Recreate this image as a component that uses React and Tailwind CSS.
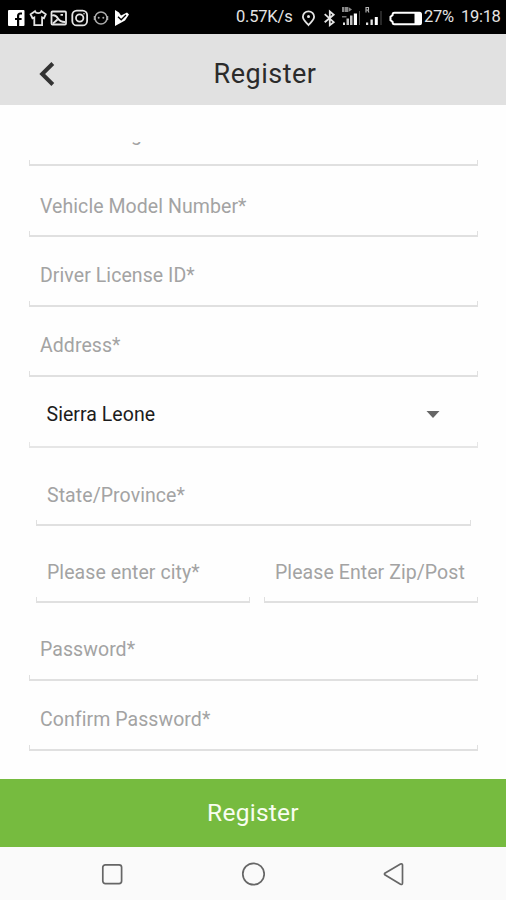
import React, { useState } from 'react';
import clsx from 'clsx';

// --- STATUS BAR ---
function StatusBar() {
  return (
    <div className="flex h-[34px] shrink-0 items-center justify-between bg-black pl-2 pr-[6px] pt-px text-[#e4e4e4]">
      <svg width="124" height="20" viewBox="0 0 124 20" fill="none" stroke="currentColor" strokeWidth="1.8">
        {/* facebook */}
        <rect x="0" y="2" width="16.500" height="16" rx="1" fill="#fff" stroke="none" />
        <path d="M14 5.500h-1.500c-1.700 0-2.400.8-2.400 2.400V18M7 11h6.600" stroke="#000" strokeWidth="2.200" />
        {/* shirt */}
        <path d="M27 3.2l-4.400 3 1.900 4 1.800-.8v7.800h7.800V9.400l1.800.8 1.900-4-4.400-3c-1 2.600-5.400 2.600-6.400 0z" />
        {/* gallery */}
        <rect x="43.500" y="3.500" width="14.500" height="13" rx="1" />
        <path d="M44 7.500c3-1 4.500 .5 6 3s3 3.500 7 3.500M45 15.500l4.500-4M52.500 6.800h2.500" />
        {/* instagram */}
        <rect x="64.300" y="2.600" width="14.800" height="14.800" rx="4.500" />
        <circle cx="71.700" cy="10" r="3.700" />
        <circle cx="76" cy="5.800" r=".8" fill="currentColor" stroke="none" />
        {/* face */}
        <g opacity=".75">
          <circle cx="93" cy="10" r="6" strokeWidth="1.500" />
          <path d="M86.500 8v4M99.500 8v4" strokeWidth="1.500" />
          <circle cx="90.700" cy="9.700" r="1" fill="currentColor" stroke="none" />
          <circle cx="95.300" cy="9.700" r="1" fill="currentColor" stroke="none" />
        </g>
        {/* play */}
        <path d="M107 2l4 2.500 2 3 6-3 2 2-4 6-10 5.500z" fill="#fff" stroke="none" />
        <path d="M110 8.800l3.200 3 4.800-4.800" stroke="#000" strokeWidth="1.300" />
      </svg>

      <div className="flex items-center">
        <span className="w-[65px] whitespace-nowrap text-[16.5px] leading-none tracking-[-0.2px]">0.57K/s</span>
        <svg className="shrink-0" width="122" height="26" viewBox="301 4 122 26" fill="none" stroke="currentColor" strokeWidth="1.8">
          {/* location */}
          <path d="M308.500 24c-2.500-3-5.600-5-5.600-8.300a5.600 5.300 0 0 1 11.200 0c0 3.300-3.100 5.300-5.600 8.300z" />
          <circle cx="308.500" cy="15.500" r="1.500" fill="currentColor" stroke="none" />
          {/* bluetooth */}
          <path d="M324.700 13.200l9 8-3.900 3V10.400l3.900 3.400-9 7.500" />
          {/* signal bars */}
          <g stroke="none" fill="currentColor">
            <rect x="342" y="15" width="4.500" height="1.500" opacity=".5" />
            <rect x="343" y="21.500" width="2" height="2.500" />
            <rect x="346.500" y="17.500" width="2.500" height="6.500" opacity=".85" />
            <rect x="350" y="14.500" width="2.500" height="9.500" opacity=".85" />
            <rect x="353.800" y="12.500" width="3.200" height="11.500" fill="#fff" />
            <rect x="359" y="10" width="1" height="14" opacity=".35" />
            <rect x="342" y="6" width="2" height="5" opacity=".6" />
            <rect x="344.500" y="6" width="3.500" height="5" opacity=".6" />
            <path d="M348.500 6l3.500 2.500-3.500 2.500z" opacity=".6" />
            <rect x="366" y="21.500" width="2.200" height="2.500" />
            <rect x="370.500" y="18.500" width="2.300" height="5.500" />
            <rect x="374.800" y="16" width="3" height="8" fill="#fff" />
            <rect x="380.500" y="10" width="1" height="14" opacity=".35" />
          </g>
          <path d="M366 11.500V6.500h2.500v2.500H366M367.700 9l1.300 2.500" strokeWidth="1.100" opacity=".8" />
          {/* battery */}
          <path d="M394.500 11.800h25q1.500 0 1.500 1.500v8.400q0 1.500-1.500 1.500h-25q-2 0-2-2.500l-2-1.500v-3.500l2-1.500q0-2.400 2-2.400z" strokeWidth="2" stroke="#fff" />
          <rect x="414.500" y="12" width="6" height="11" fill="#fff" stroke="none" />
        </svg>
        <span className="ml-px w-[37px] whitespace-nowrap text-[16.5px] leading-none tracking-[-0.3px]">27%</span>
        <span className="w-[39px] whitespace-nowrap text-[16.5px] leading-none tracking-[-0.3px]">19:18</span>
      </div>
    </div>
  );
}

// --- UNDERLINED FIELD ---
// the thin bracket under the label is its own box, so it can stay 6px high
function Field({ label, className, labelClass = 'mb-[13px]' }) {
  return (
    <div className={clsx('flex flex-col justify-end', className)}>
      <div className={clsx('whitespace-nowrap pl-[11px] text-[19.5px] leading-6 tracking-[0.07px] text-[#a3a3a3]', labelClass)}>
        {label}
      </div>
      <div className="h-[6px] border-x border-b-2 border-[#e0e0e0]" />
    </div>
  );
}

export default function App() {
  const [country] = useState('Sierra Leone');

  return (
    <div className="flex h-[900px] w-[506px] flex-col overflow-hidden bg-[#fefefe] font-['Roboto',sans-serif]">
      <StatusBar />

      {/* --- HEADER --- */}
      <header className="grid h-[71px] shrink-0 grid-cols-[60px_1fr_36px] items-center bg-[#e1e1e1] pt-[8px]">
        <svg className="ml-[38px]" width="18" height="26" viewBox="0 0 18 26" fill="none" stroke="#333" strokeWidth="4">
          <path d="M14.800 2.500L4.200 13l10.600 10.500" />
        </svg>
        <h1 className="text-center text-[27px] leading-8 tracking-[0.5px] text-[#2b2b2b]">Register</h1>
      </header>

      {/* --- FORM, scrolled under the header --- */}
      <main className="flex h-[674px] shrink-0 flex-col pl-[29px] pr-[28px] pt-[37px]">
        <div className="flex h-[24px] flex-col justify-end overflow-hidden">
          <Field label="Vehicle Registration" />
        </div>
        <Field className="h-[71px]" label="Vehicle Model Number*" labelClass="mb-[12px]" />
        <Field className="h-[70px]" label="Driver License ID*" />
        <Field className="h-[70px]" label="Address*" />

        <div className="flex h-[71px] flex-col justify-end">
          <div className="mb-[15px] flex items-center justify-between pl-[17.5px] pr-[38px] text-[19.5px] leading-6 tracking-[0.05px] text-[#1c1c1c]">
            <span>{country}</span>
            <svg width="14" height="8" viewBox="0 0 14 8" fill="#666">
              <path d="M.5 0h13L7 7z" />
            </svg>
          </div>
          <div className="h-[6px] border-x border-b-2 border-[#e6e6e6]" />
        </div>

        <Field className="ml-[7px] mr-[7px] h-[78px]" label="State/Province*" labelClass="mb-[12px]" />
        <div className="ml-[7px] grid h-[77px] grid-cols-2 gap-[14px]">
          <Field label="Please enter city*" labelClass="mb-[12px]" />
          <Field label="Please Enter Zip/Post" labelClass="mb-[12px] tracking-[0.2px]" />
        </div>
        <Field className="h-[78px]" label="Password*" />
        <Field className="h-[70px]" label="Confirm Password*" />
      </main>

      <button className="h-[68px] shrink-0 bg-[#76bb3f] text-[24.5px] tracking-[0.25px] text-[#f8fdf0]">
        Register
      </button>

      {/* --- NAVIGATION KEYS --- */}
      <nav className="flex h-[53px] shrink-0 items-center justify-between bg-[#fafafa] px-[100px] text-[#666]">
        <svg width="24" height="24" viewBox="0 0 24 24" fill="none" stroke="currentColor" strokeWidth="1.700">
          <rect x="2.800" y="2.800" width="18.800" height="18.800" rx="2.500" />
        </svg>
        <svg width="24" height="24" viewBox="0 0 24 24" fill="none" stroke="currentColor" strokeWidth="1.700">
          <circle cx="12.500" cy="12" r="10.700" />
        </svg>
        <svg width="24" height="24" viewBox="0 0 24 24" fill="none" stroke="currentColor" strokeWidth="1.700" strokeLinejoin="round">
          <path d="M2.800 11.200Q2 12 2.800 12.800L18.500 22.300Q20.500 23 20.500 21V3Q20.500 1.300 18.500 2z" />
        </svg>
      </nav>
    </div>
  );
}
